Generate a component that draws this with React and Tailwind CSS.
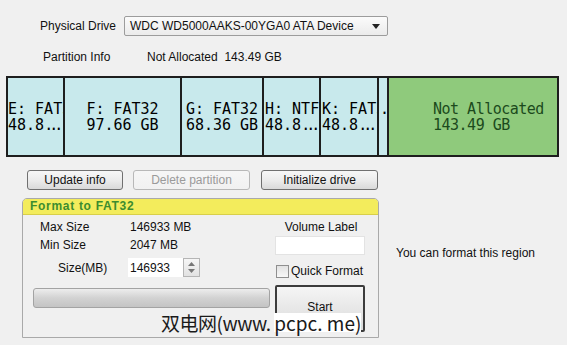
export default function App() {
  const cell =
    "flex flex-col justify-center-safe overflow-hidden whitespace-pre bg-[#c8e9ec] text-[15px] leading-[16px] text-black [font-family:'DejaVu_Sans_Mono',monospace]";
  const btn =
    "flex items-center justify-center h-[20px] rounded-[3px] border bg-linear-to-b";
  const dots = <span className="tracking-[-4px]">...</span>;
  return (
    <div className="relative w-[567px] h-[345px] overflow-hidden bg-[#f0f0f0] text-[12px] text-[#111] [font-family:'Liberation_Sans',Arial,sans-serif]">
      {/* Physical drive row */}
      <div className="flex items-center pt-[16px] pl-[40px] h-[36px]">
        <span className="w-[84px]">Physical Drive</span>
        <div className="flex items-center justify-between w-[264px] h-[20px] border border-[#9c9c9c] rounded-[2px] bg-linear-to-b from-[#fbfbfb] to-[#ebebeb] pl-[5px] pr-[7px]">
          <span>WDC WD5000AAKS-00YGA0 ATA Device</span>
          <svg width="8" height="5" viewBox="0 0 8 5">
            <path d="M0 0H8L4 5Z" fill="#222" />
          </svg>
        </div>
      </div>

      {/* Partition info row */}
      <div className="flex items-center mt-[14px] h-[14px] pl-[43px]">
        <span className="w-[104px]">Partition Info</span>
        <span>Not Allocated&nbsp;&nbsp;143.49 GB</span>
      </div>

      {/* Partition bar */}
      <div className="flex mt-[12px] ml-[6px] w-[553px] h-[81px] border-2 border-[#1e1e1e]">
        <div className={`${cell} w-[55px] items-start`}>
          <span>E: FAT32</span>
          <span>48.8{dots}</span>
        </div>
        <div className={`${cell} w-[117px] border-l-2 border-[#1e1e1e] items-center-safe`}>
          <span>F: FAT32{"\n"}97.66 GB</span>
        </div>
        <div className={`${cell} w-[82px] border-l-2 border-[#1e1e1e] items-center-safe`}>
          <span>G: FAT32{"\n"}68.36 GB</span>
        </div>
        <div className={`${cell} w-[57px] border-l-2 border-[#1e1e1e] items-start pl-[1px]`}>
          <span>H: NTFS</span>
          <span>48.8{dots}</span>
        </div>
        <div className={`${cell} w-[58px] border-l-2 border-[#1e1e1e] items-start pl-[1px]`}>
          <span>K: FAT32</span>
          <span>48.8{dots}</span>
        </div>
        <div className={`${cell} w-[10px] border-l-2 border-[#1e1e1e] items-start pl-[1px]`}>
          <span>.</span>
          <span> </span>
        </div>
        <div className="flex flex-col justify-center w-[170px] border-l-2 border-[#1e1e1e] bg-[#8fca7c] pl-[44px] whitespace-pre text-[15px] leading-[16px] text-[#1c4a1c] [font-family:'DejaVu_Sans_Mono',monospace] tracking-[-0.5px]">
          <span>Not Allocated</span>
          <span>143.49 GB</span>
        </div>
      </div>

      {/* Buttons */}
      <div className="flex mt-[13px] pl-[27px]">
        <div className={`${btn} w-[96px] border-[#707070] from-[#f7f7f7] via-[#ececec] to-[#d9d9d9]`}>
          Update info
        </div>
        <div className={`${btn} ml-[10px] w-[117px] border-[#b8b8b8] from-[#f6f6f6] to-[#f1f1f1] text-[#9a9a9a]`}>
          Delete partition
        </div>
        <div className={`${btn} ml-[11px] w-[117px] border-[#707070] from-[#f7f7f7] via-[#ececec] to-[#d9d9d9]`}>
          Initialize drive
        </div>
      </div>

      {/* Bottom area */}
      <div className="flex mt-[8px]">
        <div className="ml-[22px] w-[357px] h-[140px] border border-[#a9a9a9] rounded-t-[5px] overflow-hidden">
          <div className="h-[16px] bg-[#f3ec5c] border-b border-[#d8cf4a] pl-[7px] leading-[15px] font-bold tracking-[0.7px] text-[#3d8c2f]">
            Format to FAT32
          </div>
          <div className="flex">
            {/* left column */}
            <div className="w-[252px] pt-[3px]">
              <div className="flex items-center h-[18px] pl-[17px]">
                <span className="w-[90px]">Max Size</span>
                <span>146933 MB</span>
              </div>
              <div className="flex items-center h-[18px] pl-[17px]">
                <span className="w-[90px]">Min Size</span>
                <span>2047 MB</span>
              </div>
              <div className="flex items-center mt-[4px] h-[19px] pl-[35px]">
                <span className="w-[70px]">Size(MB)</span>
                <div className="flex items-center w-[55px] h-[19px] bg-white pl-[2px]">146933</div>
                <div className="flex flex-col items-center justify-center gap-[3px] w-[17px] h-[19px] border border-[#b5b5b5] bg-linear-to-b from-[#f6f6f6] to-[#e2e2e2]">
                  <svg width="7" height="4" viewBox="0 0 7 4">
                    <path d="M0 4L3.5 0L7 4Z" fill="#777" />
                  </svg>
                  <svg width="7" height="4" viewBox="0 0 7 4">
                    <path d="M0 0L3.5 4L7 0Z" fill="#777" />
                  </svg>
                </div>
              </div>
              <div className="mt-[11px] ml-[10px] w-[237px] h-[20px] rounded-[3px] border border-[#a3a3a3] bg-linear-to-b from-[#ededed] via-[#d2d2d2] to-[#c4c4c4]" />
            </div>
            {/* right column */}
            <div className="w-[90px] pt-[3px]">
              <div className="flex items-center justify-center h-[18px] pl-[2px]">Volume Label</div>
              <div className="h-[19px] bg-white border border-[#e3e3e3]" />
              <div className="flex items-center mt-[9px] h-[14px] pl-[1px] gap-[2px]">
                <div className="w-[13px] h-[13px] border border-[#8f8f8f] bg-linear-to-b from-[#e2e2e2] to-[#f8f8f8]" />
                <span>Quick Format</span>
              </div>
              <div className="flex items-start justify-center pt-[11px] mt-[7px] h-[47px] border-2 border-[#3c3c3c] rounded-[2px] bg-linear-to-b from-[#f5f5f5] to-[#dadada]">
                Start
              </div>
            </div>
          </div>
        </div>
        <div className="ml-[17px] mt-[48px] h-[14px] leading-[14px]">You can format this region</div>
      </div>

      {/* Watermark overlay */}
      <div className="absolute left-[161px] top-[313px] flex items-center h-[19px] text-[19px] leading-[19px] text-[#1a1a1a] [font-family:'Noto_Sans_CJK_SC',sans-serif]">
        <span className="tracking-[-0.5px]">双电网(www.&nbsp;</span>
        <span className="bg-white">pcpc. me)</span>
      </div>
    </div>
  );
}
